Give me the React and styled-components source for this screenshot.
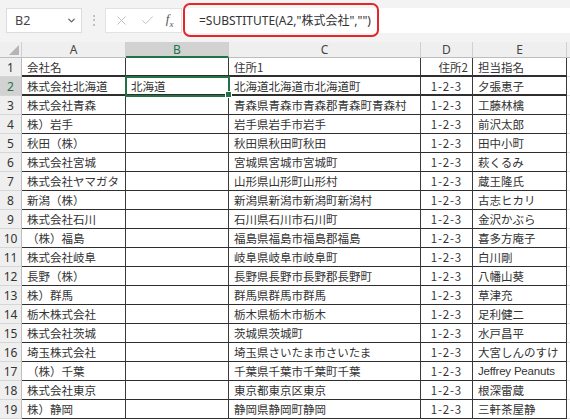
import React from "react"
import styled, { createGlobalStyle } from "styled-components"
import { X, Check, ChevronDown } from "lucide-react"

const GlobalStyle = createGlobalStyle`
  html, body {
    margin: 0;
    padding: 0;
    background: #ffffff;
  }
  body {
    font-family: "Noto Sans", "Noto Sans CJK JP", sans-serif;
    overflow: hidden;
  }
`

const rows = [
  ["会社名", "", "住所1", "住所2", "担当指名"],
  ["株式会社北海道", "北海道", "北海道北海道市北海道町", "1-2-3", "夕張恵子"],
  ["株式会社青森", "", "青森県青森市青森郡青森町青森村", "1-2-3", "工藤林檎"],
  ["株）岩手", "", "岩手県岩手市岩手", "1-2-3", "前沢太郎"],
  ["秋田（株）", "", "秋田県秋田町秋田", "1-2-3", "田中小町"],
  ["株式会社宮城", "", "宮城県宮城市宮城町", "1-2-3", "萩くるみ"],
  ["株式会社ヤマガタ", "", "山形県山形町山形村", "1-2-3", "蔵王隆氏"],
  ["新潟（株）", "", "新潟県新潟市新潟町新潟村", "1-2-3", "古志ヒカリ"],
  ["株式会社石川", "", "石川県石川市石川町", "1-2-3", "金沢かぶら"],
  ["（株）福島", "", "福島県福島市福島郡福島", "1-2-3", "喜多方庵子"],
  ["株式会社岐阜", "", "岐阜県岐阜市岐阜町", "1-2-3", "白川剛"],
  ["長野（株）", "", "長野県長野市長野郡長野町", "1-2-3", "八幡山葵"],
  ["株）群馬", "", "群馬県群馬市群馬", "1-2-3", "草津充"],
  ["栃木株式会社", "", "栃木県栃木市栃木", "1-2-3", "足利健二"],
  ["株式会社茨城", "", "茨城県茨城町", "1-2-3", "水戸昌平"],
  ["埼玉株式会社", "", "埼玉県さいたま市さいたま", "1-2-3", "大宮しんのすけ"],
  ["（株）千葉", "", "千葉県千葉市千葉町千葉", "1-2-3", "Jeffrey Peanuts"],
  ["株式会社東京", "", "東京都東京区東京", "1-2-3", "根深雷蔵"],
  ["株）静岡", "", "静岡県静岡町静岡", "1-2-3", "三軒茶屋静"],
]

const columns = ["A", "B", "C", "D", "E"]

const Page = styled.div`
  width: 570px;
  height: 419px;
  overflow: hidden;
  background: #fff;
`

const FormulaBar = styled.div`
  position: relative;
  height: 42px;
  background: #f3f3f3;
  display: flex;
  align-items: center;
  padding: 0 0 2px 6px;
  box-sizing: border-box;
`

const NameBox = styled.div`
  width: 76px;
  height: 25px;
  background: #fff;
  border: 1px solid #dcdcdc;
  box-sizing: border-box;
  display: flex;
  align-items: center;
  justify-content: space-between;
  padding: 0 4px 0 8px;
  font-size: 12.5px;
  color: #444;
`

const Dots = styled.div`
  width: 23px;
  text-align: center;
  color: #a8a8a8;
  font-size: 12px;
  line-height: 1;
`

const IconBox = styled.div`
  width: 77px;
  height: 25px;
  background: #fff;
  border: 1px solid #e2e2e2;
  box-sizing: border-box;
  display: flex;
  align-items: center;
  justify-content: space-around;
  padding: 0 2px;
  color: #b8b8b8;
`

const Fx = styled.span`
  font-family: "Liberation Serif", serif;
  font-style: italic;
  font-size: 13px;
  color: #555;
  sub {
    font-size: 9px;
  }
`

const FormulaInput = styled.div`
  flex: 1;
  height: 25px;
  background: #fff;
  display: flex;
  align-items: center;
  padding-left: 17px;
  font-size: 12px;
  color: #333;
  font-family: "Noto Sans", "Noto Sans CJK JP", sans-serif;
`

const Highlight = styled.div`
  position: absolute;
  left: 183px;
  top: 3px;
  width: 196px;
  height: 34px;
  border: 2.5px solid #e3262a;
  border-radius: 7px;
  box-sizing: border-box;
  pointer-events: none;
`

const Grid = styled.div`
  display: grid;
  grid-template-columns: 22px 104px 103px 192px 52px 94px 1fr;
  grid-template-rows: 16px;
  grid-auto-rows: 19px;
  font-family: "Noto Sans CJK JP", "Noto Sans", sans-serif;
  font-size: 11.5px;
`

const Corner = styled.div`
  background: #efefef;
  border-right: 1px solid #d0d0d0;
  border-bottom: 1px solid #bdbdbd;
  position: relative;
  &::after {
    content: "";
    position: absolute;
    right: 2px;
    bottom: 2px;
    border-style: solid;
    border-width: 0 0 10px 10px;
    border-color: transparent transparent #b5b5b5 transparent;
  }
`

const ColHeader = styled.div`
  background: ${(p) => (p.$active ? "#d2d2d2" : "#efefef")};
  color: ${(p) => (p.$active ? "#217346" : "#444")};
  border-right: 1px solid #d0d0d0;
  border-bottom: ${(p) => (p.$active ? "2px solid #217346" : "1px solid #bdbdbd")};
  box-sizing: border-box;
  display: flex;
  align-items: center;
  justify-content: center;
  font-family: "Noto Sans", sans-serif;
  font-size: 12px;
`

const RowHeader = styled.div`
  background: ${(p) => (p.$active ? "#d2d2d2" : "#efefef")};
  color: ${(p) => (p.$active ? "#217346" : "#333")};
  border-right: 1px solid #bdbdbd;
  border-bottom: 1px solid #d6d6d6;
  box-sizing: border-box;
  display: flex;
  align-items: center;
  justify-content: center;
  font-family: "Noto Sans", sans-serif;
  font-size: 12px;
`

const Cell = styled.div`
  position: relative;
  border-right: 1px solid #3a3a3a;
  border-bottom: ${(p) => (p.$thick ? "2px" : "1px")} solid #2e2e2e;
  box-sizing: border-box;
  display: flex;
  align-items: center;
  justify-content: ${(p) => (p.$right ? "flex-end" : "flex-start")};
  padding: 0 ${(p) => (p.$num ? "10px" : "4px")} 0 5px;
  color: #333;
  letter-spacing: ${(p) => (p.$num ? "0.8px" : "0")};
  white-space: nowrap;
  overflow: hidden;
  ${(p) =>
    p.$selected &&
    `
    outline: 2px solid #217346;
    outline-offset: -1px;
    z-index: 2;
    overflow: visible;
  `}
`

const Latin = styled.span`
  font-family: "Liberation Sans", sans-serif;
  font-size: 11.5px;
  letter-spacing: -0.2px;
`

const Handle = styled.span`
  position: absolute;
  right: -4px;
  bottom: -4px;
  width: 5px;
  height: 5px;
  background: #217346;
  border: 1px solid #fff;
`

const Spare = styled.div`
  background: ${(p) => (p.$head ? "#efefef" : "#fff")};
  border-bottom: 1px solid ${(p) => (p.$head ? "#bdbdbd" : "#e0e0e0")};
`

export default function App() {
  return (
    <Page>
      <GlobalStyle />
      <FormulaBar>
        <NameBox>
          <span>B2</span>
          <ChevronDown size={11} color="#666" strokeWidth={3} />
        </NameBox>
        <Dots>⋮</Dots>
        <IconBox>
          <X size={15} strokeWidth={1.4} />
          <Check size={15} strokeWidth={1.4} />
          <Fx>
            f<sub>x</sub>
          </Fx>
        </IconBox>
        <FormulaInput>=SUBSTITUTE(A2,"株式会社","")</FormulaInput>
        <Highlight />
      </FormulaBar>
      <Grid>
        <Corner />
        {columns.map((c) => (
          <ColHeader key={c} $active={c === "B"}>
            {c}
          </ColHeader>
        ))}
        <Spare $head />
        {rows.map((r, i) => (
          <React.Fragment key={i}>
            <RowHeader $active={i === 1}>{i + 1}</RowHeader>
            {r.map((v, j) => (
              <Cell
                key={j}
                $right={j === 3}
                $num={j === 3 && i > 0}
                $thick={i === 0 || i === 1}
                $selected={i === 1 && j === 1}
              >
                {/^[A-Za-z ]+$/.test(v) ? <Latin>{v}</Latin> : v}
                {i === 1 && j === 1 && <Handle />}
              </Cell>
            ))}
            <Spare />
          </React.Fragment>
        ))}
      </Grid>
    </Page>
  )
}
